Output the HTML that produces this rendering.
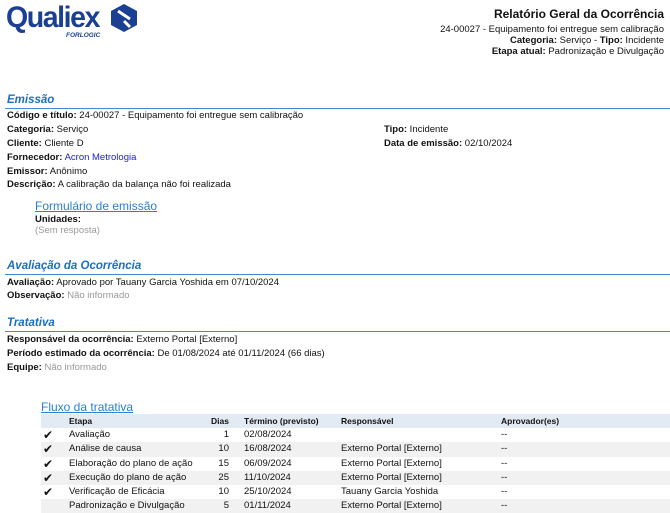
<!DOCTYPE html>
<html><head><meta charset="utf-8"><style>
*{margin:0;padding:0;box-sizing:border-box}
body{width:670px;height:513px;background:#fff;font-family:"Liberation Sans",Arial,sans-serif;font-size:9.5px;color:#111;position:relative;overflow:hidden}
.a{position:absolute;white-space:nowrap}
b{font-weight:bold}
.h{color:#1a6fc0;font-style:italic;font-weight:bold;font-size:11.5px}
.line{position:absolute;left:5px;right:0;height:1px;background:#3d8ad6}
.g{color:#999}
.lk{color:#2a7fd0;text-decoration:underline;font-size:12px}
.r{text-align:right}
table{position:absolute;left:41px;top:414px;width:629px;border-collapse:collapse;font-size:9.5px;table-layout:fixed}
tr{height:14.2px}
td{height:14.2px;line-height:14.2px;padding:0;vertical-align:middle;white-space:nowrap;overflow:hidden}
tr.hd{background:#e2eaf3;font-weight:bold;font-size:8.5px}
tr.gr{background:#f1f1f1}
.ck{padding-left:2px;font-size:12px}
</style></head><body>
<div class="a" style="left:6px;top:1px;font-size:30px;font-weight:bold;color:#1b3f93;letter-spacing:-1.5px;transform:scaleX(0.95);transform-origin:left">Qualiex</div>
<svg class="a" style="left:110px;top:3px" width="28" height="30" viewBox="0 0 28 30"><path d="M14 1 L27 8 L27 22 L14 29 L1 22 L1 8 Z" fill="#1b3f93"/><path d="M8 8 L20 16 M14 18 L20 24" stroke="#fff" stroke-width="3"/></svg>
<div class="a" style="left:66px;top:32px;font-size:6.5px;font-weight:bold;font-style:italic;color:#1b3f93">FORLOGIC</div>

<div class="a r" style="right:6px;top:7px;font-size:12px;font-weight:bold">Relatório Geral da Ocorrência</div>
<div class="a r" style="right:6px;top:24px">24-00027 - Equipamento foi entregue sem calibração</div>
<div class="a r" style="right:6px;top:35px"><b>Categoria:</b> Serviço - <b>Tipo:</b> Incidente</div>
<div class="a r" style="right:6px;top:46px"><b>Etapa atual:</b> Padronização e Divulgação</div>

<div class="a h" style="left:7px;top:94px">Emissão</div>
<div class="line" style="top:108px"></div>
<div class="a" style="left:7px;top:110px"><b>Código e título:</b> 24-00027 - Equipamento foi entregue sem calibração</div>
<div class="a" style="left:7px;top:124px"><b>Categoria:</b> Serviço</div>
<div class="a" style="left:384px;top:124px"><b>Tipo:</b> Incidente</div>
<div class="a" style="left:7px;top:138px"><b>Cliente:</b> Cliente D</div>
<div class="a" style="left:384px;top:138px"><b>Data de emissão:</b> 02/10/2024</div>
<div class="a" style="left:7px;top:152px"><b>Fornecedor:</b> <span style="color:#1b1bd8">Acron Metrologia</span></div>
<div class="a" style="left:7px;top:166px"><b>Emissor:</b> Anônimo</div>
<div class="a" style="left:7px;top:179px"><b>Descrição:</b> A calibração da balança não foi realizada</div>
<div class="a lk" style="left:35px;top:199px">Formulário de emissão</div>
<div class="a" style="left:35px;top:214px"><b>Unidades:</b></div>
<div class="a g" style="left:35px;top:225px">(Sem resposta)</div>

<div class="a h" style="left:7px;top:260px">Avaliação da Ocorrência</div>
<div class="line" style="top:274px"></div>
<div class="a" style="left:7px;top:277px"><b>Avaliação:</b> Aprovado por Tauany Garcia Yoshida em 07/10/2024</div>
<div class="a" style="left:7px;top:290px"><b>Observação:</b> <span class="g">Não informado</span></div>

<div class="a h" style="left:7px;top:317px">Tratativa</div>
<div class="line" style="top:331px"></div>
<div class="a" style="left:7px;top:334px"><b>Responsável da ocorrência:</b> Externo Portal [Externo]</div>
<div class="a" style="left:7px;top:348px"><b>Período estimado da ocorrência:</b> De 01/08/2024 até 01/11/2024 (66 dias)</div>
<div class="a" style="left:7px;top:362px"><b>Equipe:</b> <span class="g">Não informado</span></div>

<div class="a lk" style="left:41px;top:400px">Fluxo da tratativa</div>
<table>
<colgroup><col style="width:28px"><col style="width:130px"><col style="width:30px"><col style="width:15px"><col style="width:97px"><col style="width:160px"><col></colgroup>
<tr class="hd"><td></td><td>Etapa</td><td class="r">Dias</td><td></td><td>Término (previsto)</td><td>Responsável</td><td>Aprovador(es)</td></tr>
<tr><td class="ck">✔</td><td>Avaliação</td><td class="r">1</td><td></td><td>02/08/2024</td><td></td><td>--</td></tr>
<tr class="gr"><td class="ck">✔</td><td>Análise de causa</td><td class="r">10</td><td></td><td>16/08/2024</td><td>Externo Portal [Externo]</td><td>--</td></tr>
<tr><td class="ck">✔</td><td>Elaboração do plano de ação</td><td class="r">15</td><td></td><td>06/09/2024</td><td>Externo Portal [Externo]</td><td>--</td></tr>
<tr class="gr"><td class="ck">✔</td><td>Execução do plano de ação</td><td class="r">25</td><td></td><td>11/10/2024</td><td>Externo Portal [Externo]</td><td>--</td></tr>
<tr><td class="ck">✔</td><td>Verificação de Eficácia</td><td class="r">10</td><td></td><td>25/10/2024</td><td>Tauany Garcia Yoshida</td><td>--</td></tr>
<tr class="gr"><td></td><td>Padronização e Divulgação</td><td class="r">5</td><td></td><td>01/11/2024</td><td>Externo Portal [Externo]</td><td>--</td></tr>
</table>
</body></html>
